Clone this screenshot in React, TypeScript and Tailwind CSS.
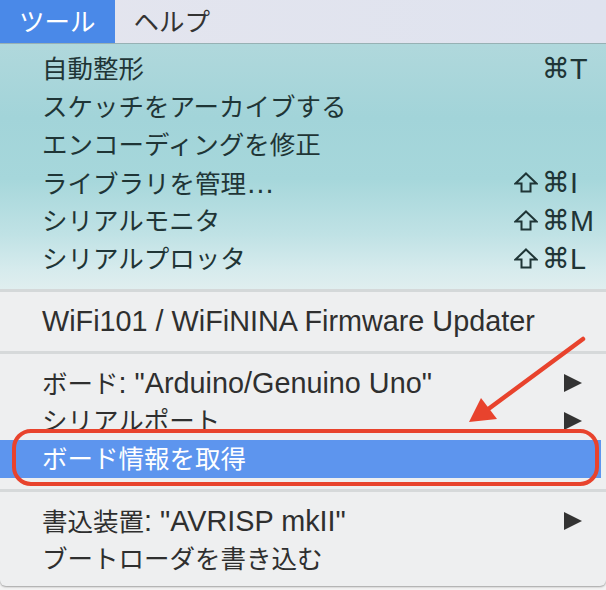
import React from "react";

const LATIN = "font-['Liberation_Sans','Noto_Sans_CJK_JP',sans-serif] text-[28.8px]";
const SYM = "font-['DejaVu_Sans',sans-serif] text-[28px]";

function L({ children }: { children: React.ReactNode }) {
  return <span className={LATIN}>{children}</span>;
}

function ShiftIcon() {
  return (
    <svg width="24" height="21" viewBox="0 0 24 21">
      <path
        d="M12 1.5 L22.5 11.5 L16.5 11.5 L16.5 19.5 L7.5 19.5 L7.5 11.5 L1.5 11.5 Z"
        fill="none"
        stroke="currentColor"
        strokeWidth="2"
        strokeLinejoin="miter"
      />
    </svg>
  );
}

function Shortcut({ shift, keyName }: { shift?: boolean; keyName: string }) {
  return (
    <div className="flex w-[92px] shrink-0 items-center leading-none">
      <span className="flex w-[29px] items-center">{shift ? <ShiftIcon /> : null}</span>
      <span className={`w-[27px] ${SYM} ml-[-1px]`}>⌘</span>
      <span className={`${LATIN} ml-[1px]`}>{keyName}</span>
    </div>
  );
}

function Arrow() {
  return (
    <div className="flex w-[92px] shrink-0 items-center pl-[50px]">
      <svg width="18" height="18" viewBox="0 0 18 18">
        <polygon points="0,0 18,9 0,18" fill="#333333" />
      </svg>
    </div>
  );
}

function Row({
  children,
  right,
  className = "",
}: {
  children: React.ReactNode;
  right?: React.ReactNode;
  className?: string;
}) {
  return (
    <div className={`flex h-[38px] items-center ${className}`}>
      <div className="flex-1 pl-[42px] pt-[1px] leading-none whitespace-nowrap">{children}</div>
      {right}
    </div>
  );
}

function Sep() {
  return (
    <div className="flex h-[24px] flex-col pt-[11px]">
      <div className="h-[3px] bg-[#d6d9da]" />
    </div>
  );
}

export default function App() {
  return (
    <div className="relative h-[590px] w-[606px] overflow-hidden bg-[#f3f3f3] font-['Liberation_Sans','Noto_Sans_CJK_JP',sans-serif] text-[25.5px]">
      {/* menu bar */}
      <div className="flex h-[44px] border-b border-[#9ab4b7] bg-[linear-gradient(90deg,#e4e5ee,#dfe3ef)] leading-none">
        <div className="flex items-center bg-[#4a89e8] px-[19px] pt-[2px] text-white">ツール</div>
        <div className="flex items-center px-[19px] pt-[2px] text-[#333333]">ヘルプ</div>
      </div>

      {/* menu */}
      <div className="rounded-b-[6px] bg-[#eeeff0] shadow-[0_1px_2px_rgba(0,0,0,0.35)]">
        <div className="bg-[linear-gradient(180deg,#b0d8dc_0%,#a2d4d9_30%,#a6d7db_55%,#c0e2e5_78%,#d6ebed_92%,#e0eeef_100%)] pt-[6px] pb-[11px] text-[#1f3536]">
          <Row right={<Shortcut keyName="T" />}>自動整形</Row>
          <Row right={<div className="w-[92px]" />}>スケッチをアーカイブする</Row>
          <Row right={<div className="w-[92px]" />}>エンコーディングを修正</Row>
          <Row right={<Shortcut shift keyName="I" />}>
            ライブラリを管理<L>…</L>
          </Row>
          <Row right={<Shortcut shift keyName="M" />}>シリアルモニタ</Row>
          <Row right={<Shortcut shift keyName="L" />}>シリアルプロッタ</Row>
        </div>
        <div className="h-[3px] bg-[#d4d8d9]" />
        <div className="pt-[10px] pb-[8px] text-[#2f2f2f]">
          <Row>
            <L>WiFi101 / WiFiNINA Firmware Updater</L>
          </Row>
          <Sep />
          <Row right={<Arrow />}>
            ボード<L>: "Arduino/Genuino Uno"</L>
          </Row>
          <Row right={<Arrow />}>シリアルポート</Row>
          <Row className="mr-[5px] bg-[#5d95ee] text-white">ボード情報を取得</Row>
          <Sep />
          <Row right={<Arrow />}>
            書込装置<L>: "AVRISP mkII"</L>
          </Row>
          <Row>ブートローダを書き込む</Row>
        </div>
      </div>

      {/* annotation overlay */}
      <div className="pointer-events-none absolute left-[12px] top-[429px] h-[57px] w-[587px] rounded-[19px] border-[4px] border-[#e8432d]" />
      <svg className="pointer-events-none absolute left-0 top-0" width="606" height="590" viewBox="0 0 606 590">
        <line x1="583" y1="339" x2="487" y2="410" stroke="#e8432d" strokeWidth="4.5" strokeLinecap="round" />
        <polygon points="469,422 481,398 497,419" fill="#e8432d" />
      </svg>
    </div>
  );
}
